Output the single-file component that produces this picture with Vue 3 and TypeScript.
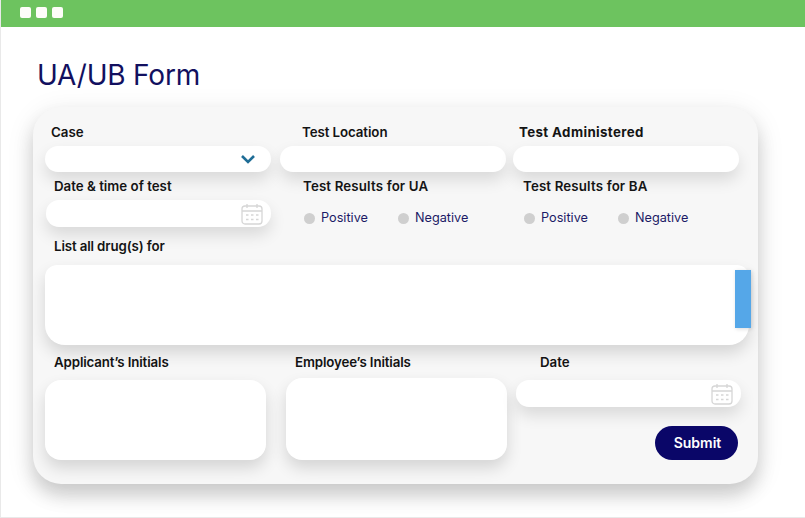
<script setup lang="ts">
const options = ['Positive', 'Negative']
</script>

<template>
  <div class="page">
    <header class="bar">
      <span class="dot"></span><span class="dot"></span><span class="dot"></span>
    </header>
    <main class="body">
      <h1 class="title">UA/UB Form</h1>
      <section class="card">
        <div class="row row-one">
          <div class="field f-case">
            <label class="label">Case</label>
            <div class="input">
              <svg class="chev" width="16" height="10" viewBox="0 0 16 10"><path d="M2 2l6 6 6-6" fill="none" stroke="#1f6d96" stroke-width="2.6" /></svg>
            </div>
          </div>
          <div class="field f-loc">
            <label class="label">Test Location</label>
            <div class="input"></div>
          </div>
          <div class="field f-adm">
            <label class="label poppins">Test Administered</label>
            <div class="input"></div>
          </div>
        </div>

        <div class="row row-two">
          <div class="field f-date">
            <label class="label">Date &amp; time of test</label>
            <div class="input">
              <svg class="cal" width="22" height="22" viewBox="0 0 22 22" fill="none" stroke="#d6d6d6" stroke-width="1.3">
                <rect x="1" y="3" width="20" height="18" rx="3" />
                <path d="M1 8h20M6 1v4M16 1v4" />
                <path d="M5 12h2.500M10 12h2.500M15 12h2.500M5 16.500h2.500M10 16.500h2.500M15 16.500h2.500" stroke-width="1.600" />
              </svg>
            </div>
          </div>
          <div class="results r-ua">
            <div class="label poppins-m">Test Results for UA</div>
            <div class="radios">
              <span v-for="o in options" :key="o" class="radio"><i class="bullet"></i>{{ o }}</span>
            </div>
          </div>
          <div class="results r-ba">
            <div class="label poppins-m">Test Results for BA</div>
            <div class="radios">
              <span v-for="o in options" :key="o" class="radio"><i class="bullet"></i>{{ o }}</span>
            </div>
          </div>
        </div>

        <div class="list">
          <label class="label tight">List all drug(s) for</label>
          <div class="area"><span class="thumb"></span></div>
        </div>

        <div class="row row-four">
          <div class="field f-app">
            <label class="label tight">Applicant’s Initials</label>
            <div class="box"></div>
          </div>
          <div class="field f-emp">
            <label class="label tight">Employee’s Initials</label>
            <div class="box tall"></div>
          </div>
          <div class="field f-last">
            <label class="label">Date</label>
            <div class="input">
              <svg class="cal" width="22" height="22" viewBox="0 0 22 22" fill="none" stroke="#d6d6d6" stroke-width="1.3">
                <rect x="1" y="3" width="20" height="18" rx="3" />
                <path d="M1 8h20M6 1v4M16 1v4" />
                <path d="M5 12h2.500M10 12h2.500M15 12h2.500M5 16.500h2.500M10 16.500h2.500M15 16.500h2.500" stroke-width="1.600" />
              </svg>
            </div>
            <button class="submit" type="button">Submit</button>
          </div>
        </div>
      </section>
    </main>
  </div>
</template>

<style>
html, body { margin: 0; background: #fff; }
</style>

<style scoped>
.page {
  width: 805px;
  height: 518px;
  box-sizing: border-box;
  overflow: hidden;
  font-family: "Inter", "Liberation Sans", sans-serif;
  background: #fff;
  border-left: 1px solid #e9e9e9;
  border-bottom: 1px solid #e9e9e9;
}
.bar {
  height: 27px;
  margin-left: -1px;
  background: #6dc35f;
  display: flex;
  align-items: flex-start;
  gap: 5px;
  padding: 7px 0 0 20px;
  box-sizing: border-box;
}
.dot { width: 11px; height: 11px; border-radius: 2px; background: #fdfdf9; }
.body { padding: 0 0 0 32px; }
.title {
  margin: 0;
  padding-top: 28px;
  height: 52px;
  padding-left: 4px;
  font-size: 28px;
  line-height: 40px;
  font-weight: 400;
  color: #12105f;
  letter-spacing: -0.2px;
}
.card {
  width: 725px;
  height: 377px;
  box-sizing: border-box;
  padding: 16px 0 0 12px;
  border-radius: 28px;
  background: #f7f7f7;
  box-shadow: 0 12px 18px rgba(0, 0, 0, 0.15), 0 6px 28px rgba(0, 0, 0, 0.1);
}
.row { display: flex; align-items: flex-start; }
.field { width: 226px; flex: none; }
.label {
  display: block;
  font-size: 13.3px;
  line-height: 18px;
  font-weight: 600;
  color: #141414;
}
.tight { letter-spacing: -0.13px; }
.poppins { font-weight: 700; letter-spacing: 0.38px; }
.poppins-m { font-weight: 600; letter-spacing: 0.15px; }
.input {
  height: 26px;
  border-radius: 13px;
  background: #fff;
  box-shadow: 0 8px 16px rgba(0, 0, 0, 0.12);
  display: flex;
  align-items: center;
  justify-content: flex-end;
}
.f-case .label { padding-left: 6px; margin-bottom: 5px; }
.f-loc { margin-left: 9px; }
.f-loc .label { padding-left: 22px; margin-bottom: 5px; letter-spacing: -0.08px; }
.f-adm { margin-left: 7px; }
.f-adm .label { padding-left: 6px; margin-bottom: 5px; }
.chev { margin-right: 15px; }
.row-two { margin-top: 5px; }
.f-date { margin-left: 1px; width: 225px; }
.f-date .label { padding-left: 8px; margin-bottom: 5px; }
.f-date .input { height: 27px; }
.cal { margin-right: 8px; }
.results { flex: none; }
.r-ua { margin-left: 32px; width: 220px; }
.r-ba { margin-left: 0; }
.radios { display: flex; margin: 14px 0 0 1px; gap: 30px; }
.radio {
  display: flex;
  align-items: center;
  gap: 6px;
  font-size: 12.7px;
  line-height: 18px;
  color: #1c1a66;
}
.bullet { width: 11px; height: 11px; border-radius: 50%; background: #cfcfcf; }
.list { margin-top: 10px; }
.list .label { padding-left: 9px; margin-bottom: 10px; }
.area {
  position: relative;
  width: 704px;
  height: 80px;
  border-radius: 12px 12px 20px 20px;
  background: #fff;
  box-shadow: 0 8px 16px rgba(0, 0, 0, 0.14);
}
.thumb {
  position: absolute;
  top: 5px;
  right: -2px;
  width: 16px;
  height: 58px;
  background: #55a7e8;
  box-shadow: 1px 1px 4px rgba(0, 0, 0, 0.15);
}
.row-four { margin-top: 8px; }
.f-app { width: 221px; }
.f-app .label { padding-left: 9px; margin-bottom: 9px; }
.f-emp { width: 221px; margin-left: 20px; }
.f-emp .label { padding-left: 9px; margin-bottom: 7px; }
.box {
  height: 80px;
  border-radius: 16px;
  background: #fff;
  box-shadow: 0 8px 16px rgba(0, 0, 0, 0.14);
}
.box.tall { height: 82px; }
.f-last { margin-left: 9px; width: 225px; display: flex; flex-direction: column; }
.f-last .label { padding-left: 24px; margin-bottom: 9px; }
.f-last .input { height: 27px; }
.submit {
  align-self: flex-end;
  margin: 19px 3px 0 0;
  width: 83px;
  height: 34px;
  border: 0;
  border-radius: 17px;
  background: #0a0668;
  color: #fff;
  font: 600 14px/34px "Inter", sans-serif;
  padding: 0 0 0 2px;
}
</style>
